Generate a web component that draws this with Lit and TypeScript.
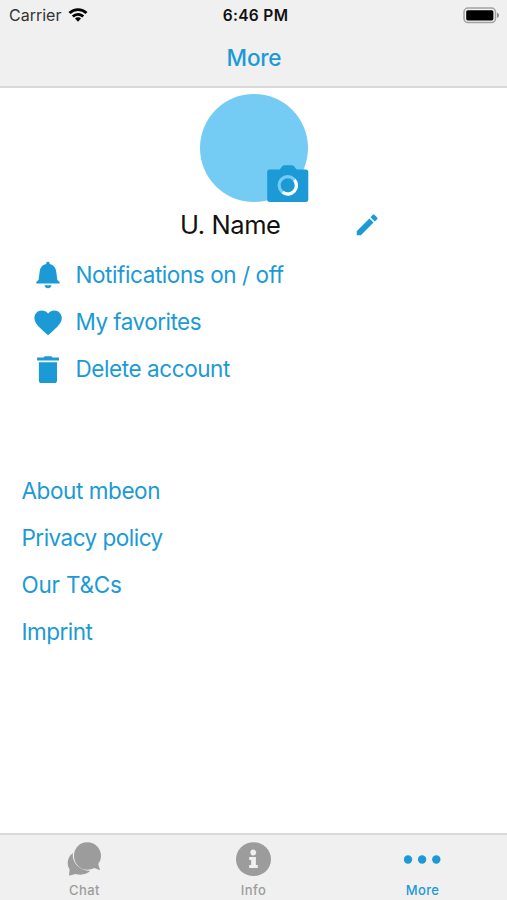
import { LitElement, html, css, svg } from "lit";
import { customElement } from "lit/decorators.js";

const bell = svg`<svg class="ico" viewBox="0 0 28 28" width="28" height="28">
  <path d="M13.900.7c1 0 1.600.6 1.700 1.500l.1.900c3.900.9 6.200 3.900 6.600 7.900l.8 6.700c.1.900.4 1.500 1.100 2.100l1.400 1.200v1.600H2.300V21l1.400-1.200c.7-.6 1-1.200 1.100-2.100l.8-6.700c.4-4 2.600-7 6.500-7.900l.1-.9c.1-.9.7-1.500 1.700-1.500z"/>
  <path d="M10.400 24.300h7.200c-.5 1.900-1.800 3-3.600 3s-3.100-1.100-3.600-3z"/></svg>`;
const heart = svg`<svg class="ico" viewBox="0 0 28 28" width="28" height="28">
  <path d="M14.100 27.200l-2.300-2C4.700 18.800.4 15 .4 10 .4 5.800 3.600 2.400 7.800 2.400c2.400 0 4.800 1.200 6.300 3.100 1.500-1.900 3.900-3.100 6.200-3.100 4.200 0 7.500 3.400 7.500 7.600 0 5-4.300 8.800-11.400 15.200z"/></svg>`;
const trash = svg`<svg class="ico" viewBox="0 0 28 28" width="28" height="28">
  <path d="M3.100 2.400h6.500L10.800 1.300h6.600l1.200 1.100H25v3.100H3.100z"/>
  <path d="M4.900 7.200H23v18.300a2.900 2.900 0 0 1-2.900 2.900H7.800a2.900 2.900 0 0 1-2.900-2.900z"/></svg>`;

const actions = [
  { icon: bell, label: "Notifications on / off", cls: "normal" },
  { icon: heart, label: "My favorites", cls: "tight" },
  { icon: trash, label: "Delete account", cls: "normal" },
];
const links = [
  { label: "About mbeon", cls: "normal" },
  { label: "Privacy policy", cls: "tight" },
  { label: "Our T&Cs", cls: "loose" },
  { label: "Imprint", cls: "tight" },
];

const chatIcon = svg`<svg viewBox="0 0 36 36" width="36" height="36">
  <path d="M6 12C2.400 14.600.7 18.200.7 22c0 2.300.6 4.200 1.900 6.100L2 34.800l6.700-1.900c4.900 1.500 10.600.8 14.600-3.100-4.500.2-9.300-1.200-12.700-4.700C7 21.300 5.200 17 6 12z"/>
  <path d="M20.200 1.200c7.800 0 13.800 6 13.800 13.500 0 3.200-1 5.800-2.800 8.200l1.900 6.400-5.800-2.200c-2 1.100-4.500 1.700-7.100 1.700-7.700 0-13.200-6.400-13.200-14S12.500 1.200 20.200 1.200z"/></svg>`;
const infoIcon = svg`<svg viewBox="0 0 36 36" width="36" height="36">
  <ellipse cx="17.500" cy="18.200" rx="17.500" ry="16.900"/>
  <circle class="cut" cx="17.300" cy="11.500" r="2.900"/>
  <path class="cut" d="M13.200 15.900h6.700v8h1.900v3.100h-8.600v-3.100h2v-4.900h-2z"/></svg>`;
const dotsIcon = svg`<svg viewBox="0 0 38 36" width="38" height="36">
  <circle cx="4" cy="18.500" r="4.200"/><circle cx="18.100" cy="18.500" r="4.200"/><circle cx="32.300" cy="18.500" r="4.200"/></svg>`;

const tabs = [
  { icon: chatIcon, label: "Chat", cls: "tab" },
  { icon: infoIcon, label: "Info", cls: "tab" },
  { icon: dotsIcon, label: "More", cls: "tab active" },
];

@customElement("app-root")
export class AppRoot extends LitElement {
  static styles = css`
    :host {
      display: flex;
      flex-direction: column;
      box-sizing: border-box;
      width: 507px;
      height: 900px;
      overflow: hidden;
      background: #fff;
      color: #1b9ad6;
      font-family: Inter, "Liberation Sans", sans-serif;
      white-space: nowrap;
    }
    svg { display: block; fill: currentColor; flex: none; }
    header {
      box-sizing: border-box;
      height: 88px;
      background: #f0f0f0;
      border-bottom: 2px solid #d9d9d9;
    }
    .status {
      display: grid;
      grid-template-columns: 1fr auto 1fr;
      align-items: center;
      height: 30px;
      padding: 0 7px 0 9px;
      color: #111;
      font-size: 16px;
    }
    .carrier { display: flex; align-items: center; gap: 7px; color: #333; letter-spacing: 0; }
    .wifi { color: #000; margin-top: -1px; }
    .time { font-weight: 600; font-size: 15.500px; letter-spacing: 0.35px; padding-left: 2px; }
    .battery { justify-self: end; }
    h1 {
      margin: 0;
      height: 56px;
      line-height: 56px;
      text-align: center;
      font-size: 22.500px;
      font-weight: 500;
      letter-spacing: -0.2px;
      padding-left: 1px;
    }
    main { flex: 1; }
    .avatar {
      position: relative;
      width: 108px;
      height: 108px;
      margin: 6px auto 0 200px;
      border-radius: 50%;
      background: #74cbf3;
    }
    .camera { position: absolute; left: 67px; top: 71px; }
    .name {
      display: flex;
      align-items: center;
      height: 45px;
      margin-bottom: 1px;
      padding-left: 180px;
      color: #111;
      font-size: 25.500px;
      letter-spacing: -0.4px;
    }
    .name span { width: 172.500px; }
    .pencil { color: #1b9ad6; }
    ul { list-style: none; margin: 0; padding: 0; font-size: 22.500px; }
    li { display: flex; align-items: center; height: 47.200px; }
    .normal { letter-spacing: -0.42px; }
    .tight { letter-spacing: -0.52px; }
    .loose { letter-spacing: -0.22px; }
    .actions { padding: 3px 0 0 34px; }
    .actions li { gap: 13.500px; }
    .links { padding: 74px 0 0 21.500px; }
    nav {
      box-sizing: border-box;
      display: grid;
      grid-template-columns: repeat(3, 1fr);
      height: 67px;
      border-top: 2px solid #d9d9d9;
      background: #f0f0f0;
      color: #9c9c9c;
    }
    .tab {
      display: flex;
      flex-direction: column;
      align-items: center;
      padding-top: 6px;
      font-size: 13px;
      font-weight: 500;
      line-height: 16px;
      letter-spacing: 0.4px;
    }
    .tab span { margin-top: 5px; }
    .active { color: #1b9ad6; }
    .cut { fill: #f0f0f0; }
  `;

  render() {
    return html`
      <header>
        <div class="status">
          <div class="carrier">
            <span>Carrier</span>
            <svg class="wifi" viewBox="0 0 20 14" width="20" height="14">
              <path d="M10 .2c3.700 0 7 1.400 9.500 3.800l-2 2.100A10.800 10.800 0 0 0 10 3.100 10.800 10.800 0 0 0 2.500 6.100L.5 4A13.700 13.700 0 0 1 10 .2z"/>
              <path d="M10 4.900c2.400 0 4.600.9 6.200 2.500l-2 2A6 6 0 0 0 10 7.700a6 6 0 0 0-4.200 1.700l-2-2A8.800 8.800 0 0 1 10 4.900z"/>
              <path d="M10 9.300c1.200 0 2.200.5 3 1.200l-3 3.200-3-3.200c.8-.7 1.800-1.200 3-1.200z"/>
            </svg>
          </div>
          <div class="time">6:46 PM</div>
          <svg class="battery" viewBox="0 0 37 17" width="37" height="17">
            <rect x="1" y="1" width="31.500" height="14.600" rx="4" fill="none" stroke="#a2a2a2" stroke-width="1.500"/>
            <rect x="3.200" y="3.200" width="27.200" height="10.200" rx="1.600" fill="#000"/>
            <path d="M34 5.700c1.200.3 2 1.300 2 2.600s-.8 2.300-2 2.600z" fill="#8c8c8c"/>
          </svg>
        </div>
        <h1>More</h1>
      </header>
      <main>
        <div class="avatar">
          <svg class="camera" viewBox="0 0 42 38" width="42" height="38">
            <path fill="#1b9ad6" d="M2.800 4.500h8.700c1.400 0 2-1.100 2.800-2.100C15.400 1 16 .2 17.600.2h7.200c1.600 0 2.200.8 3.200 2.200.8 1 1.400 2.100 2.800 2.100h7.900a2.600 2.600 0 0 1 2.600 2.600v27.200a2.600 2.600 0 0 1-2.600 2.600H2.800A2.600 2.600 0 0 1 .2 34.300V7.100a2.600 2.600 0 0 1 2.600-2.600z"/>
            <circle cx="20.700" cy="20.300" r="8.600" fill="none" stroke="#74cbf3" stroke-width="3.200"/>
            <path d="M27.400 14.900A8.600 8.600 0 0 1 15.600 27.300" fill="none" stroke="#fff" stroke-width="3.200"/>
          </svg>
        </div>
        <div class="name">
          <span>U. Name</span>
          <svg class="pencil" viewBox="0 0 24 24" width="28" height="28">
            <path d="M3.200 17.250V20.200q0 .6.600.6H6.750L17.600 9.950l-3.550-3.550L3.200 17.250zM20.710 7.040a1 1 0 0 0 0-1.410l-2.340-2.340a1 1 0 0 0-1.410 0l-2 2 3.750 3.750 2-2z"/>
          </svg>
        </div>
        <ul class="actions">
          ${actions.map((a) => html`<li>${a.icon}<span class=${a.cls}>${a.label}</span></li>`)}
        </ul>
        <ul class="links">
          ${links.map((l) => html`<li class=${l.cls}>${l.label}</li>`)}
        </ul>
      </main>
      <nav>
        ${tabs.map((t) => html`<div class=${t.cls}>${t.icon}<span>${t.label}</span></div>`)}
      </nav>
    `;
  }
}
